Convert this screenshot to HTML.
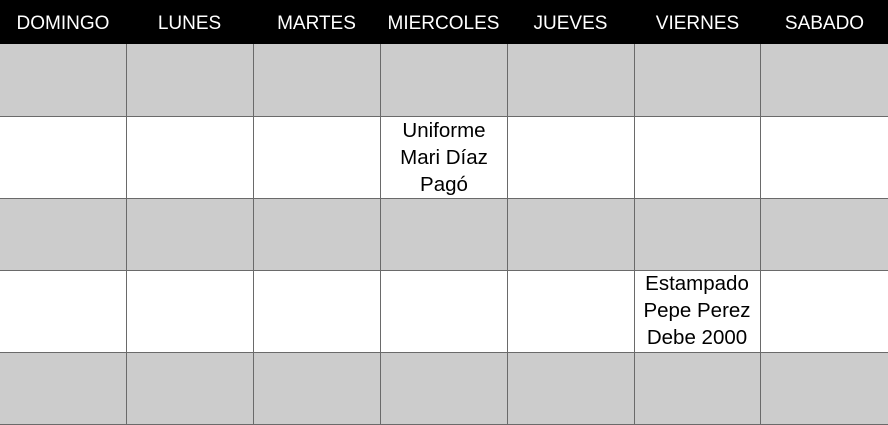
<!DOCTYPE html>
<html><head><style>
body{margin:0;width:888px;height:425px;position:relative;background:#fff;font-family:"Liberation Sans",sans-serif;overflow:hidden}
.h{position:absolute;top:0;left:0;width:888px;height:44px;background:#000}
.h div{position:absolute;top:2px;height:44px;line-height:44px;color:#fff;font-size:19px;text-align:center}
.g{position:absolute;left:0;width:888px;background:#cccccc}
.hl{position:absolute;left:0;width:888px;height:1px;background:#6a6a6a}
.vl{position:absolute;top:44px;width:1px;height:381px;background:#6a6a6a}
.t{position:absolute;width:126px;text-align:center;font-size:20.5px;line-height:27px;color:#000}
</style></head><body>
<div class="g" style="top:44px;height:73px"></div>
<div class="g" style="top:198px;height:72px"></div>
<div class="g" style="top:352px;height:73px"></div>
<div class="h">
<div style="left:0;width:126px">DOMINGO</div>
<div style="left:126px;width:127px">LUNES</div>
<div style="left:253px;width:127px">MARTES</div>
<div style="left:380px;width:127px">MIERCOLES</div>
<div style="left:507px;width:127px">JUEVES</div>
<div style="left:634px;width:127px">VIERNES</div>
<div style="left:761px;width:127px">SABADO</div>
</div>
<div class="hl" style="top:116px"></div>
<div class="hl" style="top:198px"></div>
<div class="hl" style="top:270px"></div>
<div class="hl" style="top:352px"></div>
<div class="hl" style="top:424px"></div>
<div class="vl" style="left:126px"></div>
<div class="vl" style="left:253px"></div>
<div class="vl" style="left:380px"></div>
<div class="vl" style="left:507px"></div>
<div class="vl" style="left:634px"></div>
<div class="vl" style="left:760px"></div>
<div class="t" style="left:381px;top:117px">Uniforme<br>Mari Díaz<br>Pagó</div>
<div class="t" style="left:634px;top:270px">Estampado<br>Pepe Perez<br>Debe 2000</div>
</body></html>
